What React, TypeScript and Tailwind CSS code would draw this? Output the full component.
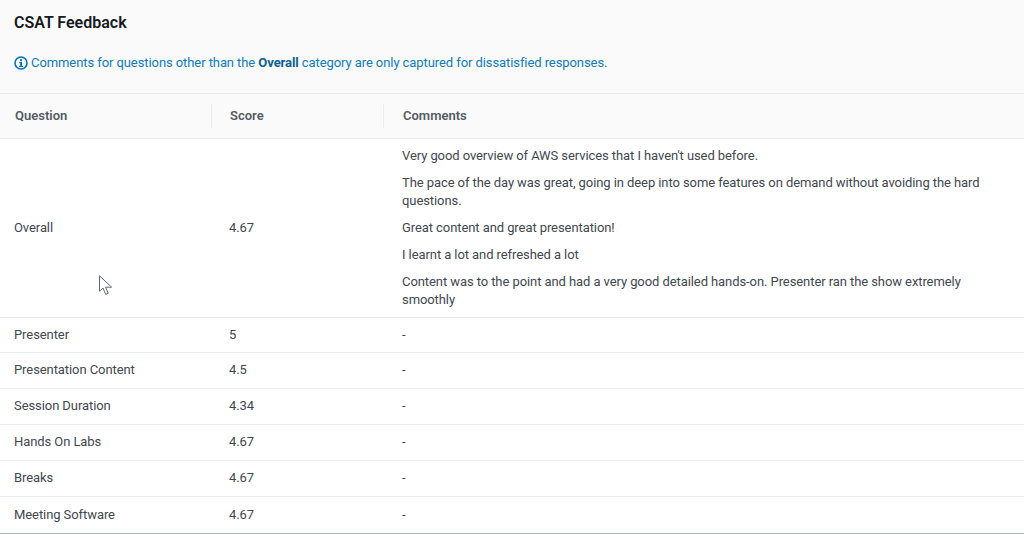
import React from 'react';

type Row = { question: string; score: string; comments: string[]; height: string };

const rows: Row[] = [
  {
    question: 'Overall',
    score: '4.67',
    height: 'h-[179px]',
    comments: [
      "Very good overview of AWS services that I haven't used before.",
      'The pace of the day was great, going in deep into some features on demand without avoiding the hard questions.',
      'Great content and great presentation!',
      'I learnt a lot and refreshed a lot',
      'Content was to the point and had a very good detailed hands-on. Presenter ran the show extremely smoothly',
    ],
  },
  { question: 'Presenter', score: '5', height: 'h-[35px]', comments: ['-'] },
  { question: 'Presentation Content', score: '4.5', height: 'h-[36px]', comments: ['-'] },
  { question: 'Session Duration', score: '4.34', height: 'h-[36px]', comments: ['-'] },
  { question: 'Hands On Labs', score: '4.67', height: 'h-[36px]', comments: ['-'] },
  { question: 'Breaks', score: '4.67', height: 'h-[36px]', comments: ['-'] },
  { question: 'Meeting Software', score: '4.67', height: 'h-[36px]', comments: ['-'] },
];

const InfoIcon = () => (
  <svg width="14" height="14" viewBox="0 0 14 14" className="shrink-0">
    <circle cx="7" cy="7" r="6" fill="none" stroke="#0073bb" strokeWidth="1.6" />
    <rect x="6" y="3.2" width="2" height="1.9" fill="#0073bb" />
    <path d="M5.2 6.1H8V9.8H9V11H5.2V9.8H6.2V7.2H5.2Z" fill="#0073bb" />
  </svg>
);

const Cursor = () => (
  <svg width="14" height="21" viewBox="0 0 14 21" className="absolute left-[99px] top-[275px]">
    <path d="M0.5 0.8V16.2L4 13L6.6 19.4L9.2 18.3L6.6 12.2H12.6Z" fill="#fff" stroke="#5f6b73" strokeWidth="1" />
  </svg>
);

const HeadCell = ({ label, className }: { label: string; className: string }) => (
  <div className={`flex h-[24px] items-center text-[13px] font-semibold text-[#545b64] ${className}`}>{label}</div>
);

export default function App() {
  return (
    <div
      className="relative h-[534px] w-[1024px] overflow-hidden bg-white text-[#3f474f]"
      style={{ fontFamily: 'Roboto, "Noto Sans", sans-serif' }}
    >
      <div className="h-[94px] border-b border-[#eaeded] bg-[#fafafa] pl-[14px] pt-[12px]">
        <h1 className="text-[16px] leading-[21px] font-semibold text-[#16191f]">CSAT Feedback</h1>
        <div className="mt-[20px] flex items-center gap-[3px] text-[13px] leading-[20px] tracking-[-0.08px] text-[#0f7cbd]">
          <InfoIcon />
          <p>
            Comments for questions other than the <span className="font-bold text-[#0a5f96]">Overall</span> category are only captured for dissatisfied responses.
          </p>
        </div>
      </div>

      <div className="flex h-[45px] items-center border-b border-[#eaeded] bg-[#fafafa]">
        <HeadCell label="Question" className="w-[212px] border-r border-[#eaeded] pl-[15px]" />
        <HeadCell label="Score" className="w-[172px] border-r border-[#eaeded] pl-[18px]" />
        <HeadCell label="Comments" className="flex-1 pl-[19px]" />
      </div>

      <div className="border-b-2 border-[#aab7b8]">
        {rows.map((row, i) => (
          <div
            key={row.question}
            className={`flex items-center pb-[1px] text-[13px] leading-[18px] tracking-[-0.08px] ${row.height} ${i < rows.length - 1 ? 'border-b border-[#eaeded]' : ''}`}
          >
            <div className="w-[229px] pl-[14px]">{row.question}</div>
            <div className="w-[173px]">{row.score}</div>
            <div className="flex flex-1 flex-col gap-[9px] pr-[30px]">
              {row.comments.map((c) => (
                <p key={c}>{c}</p>
              ))}
            </div>
          </div>
        ))}
      </div>
      <Cursor />
    </div>
  );
}
